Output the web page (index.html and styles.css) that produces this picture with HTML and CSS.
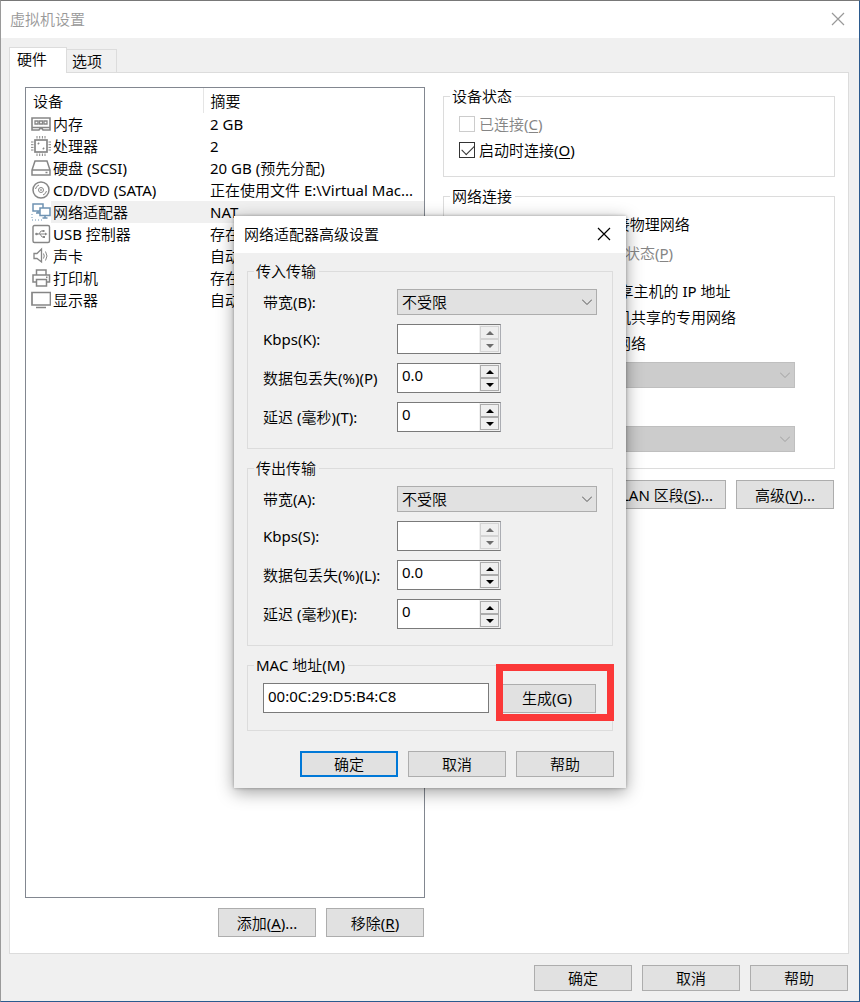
FILE: index.html
```html
<!DOCTYPE html>
<html lang="zh-CN">
<head>
<meta charset="utf-8">
<title>虚拟机设置</title>
<link rel="stylesheet" href="styles.css">
</head>
<body>
<div class="window">
  <header class="titlebar titlebar-inactive">
    <h1>虚拟机设置</h1>
    <button class="close" aria-label="关闭"><svg viewBox="0 0 14 14"><path d="M1 1l12 12M13 1L1 13"/></svg></button>
  </header>

  <main class="content">
    <div class="tabs" role="tablist">
      <button class="tab tab-active" role="tab" aria-selected="true">硬件</button>
      <button class="tab" role="tab" aria-selected="false">选项</button>
    </div>
    <div class="panel">
      <section class="devices">
        <div class="listbox">
          <table class="device-table">
            <colgroup><col class="col-icon"><col class="col-name"><col></colgroup>
            <thead>
              <tr><th colspan="2" class="head-device">设备</th><th class="head-summary">摘要</th></tr>
            </thead>
            <tbody>
              <tr>
                <td class="icon"><svg viewBox="0 0 20 20"><path d="M1 4h18v9.500H1zM1 12.500V16h7l1-1.500h2l1 1.500h7v-3.500" stroke-width="1.600"/><path d="M4 7h3v3H4zM8.500 7h3v3h-3zM13 7h3v3h-3z" stroke-width="1.300"/></svg></td>
                <td>内存</td><td class="summary">2 GB</td>
              </tr>
              <tr>
                <td class="icon"><svg viewBox="0 0 20 20"><rect x="4" y="4" width="12" height="12" stroke-width="1.700"/><path d="M6 0v2.500M8.700 0v2.500M11.400 0v2.500M14 0v2.500M6 17.500V20M8.700 17.500V20M11.400 17.500V20M14 17.500V20M0 6h2.500M0 8.700h2.500M0 11.400h2.500M0 14h2.500M17.500 6H20M17.500 8.700H20M17.500 11.400H20M17.500 14H20"/><path d="M7 7l1 1M12 12l1 1" stroke-width="2"/></svg></td>
                <td>处理器</td><td class="summary">2</td>
              </tr>
              <tr>
                <td class="icon"><svg viewBox="0 0 20 20"><path d="M4 3h12l3 9v5H1v-5zM1 12h18" stroke-width="1.500"/><path d="M14.500 14.500h2" stroke-width="1.500"/></svg></td>
                <td>硬盘 (SCSI)</td><td class="summary">20 GB (预先分配)</td>
              </tr>
              <tr>
                <td class="icon"><svg viewBox="0 0 20 20"><circle cx="10" cy="10" r="8" stroke-width="1.500"/><circle cx="10" cy="10" r="2.500"/><circle cx="10" cy="10" r=".5"/><path d="M4.500 9A5.500 5.500 0 0 1 8 5M15.500 11A5.500 5.500 0 0 1 12 15"/></svg></td>
                <td>CD/DVD (SATA)</td><td class="summary">正在使用文件 E:\Virtual Mac...</td>
              </tr>
              <tr class="selected">
                <td class="icon icon-blue"><svg viewBox="0 0 20 20"><path d="M2 2h10v7H2zM5 11h4M7 9v2" stroke-width="1.500"/><path class="fill" d="M9 6h10v7.500H9z" stroke-width="1.500"/><path d="M14 13.500V16M11.500 16h5" stroke-width="1.500"/><path d="M1 12v6h10" stroke-dasharray="1 2"/></svg></td>
                <td>网络适配器</td><td class="summary">NAT</td>
              </tr>
              <tr>
                <td class="icon"><svg viewBox="0 0 20 20"><rect x="2" y="1.500" width="16.500" height="17" rx="1.500" stroke-width="1.400"/><path d="M5 10h10M8 10l2-3h2M9 10l2 3h2"/><path class="solid" d="M14 8.500l2.500 1.500-2.500 1.500zM11.500 6h2v2h-2zM12 12h2v2h-2z"/><circle class="solid" cx="5.500" cy="10" r="1.300"/></svg></td>
                <td>USB 控制器</td><td class="summary">存在</td>
              </tr>
              <tr>
                <td class="icon"><svg viewBox="0 0 20 20"><path d="M3 7.500h3l4.500-4.500v13L6 12.500H3z" stroke-width="1.300"/><path d="M12.500 7.500q1.500 2.500 0 5M14.500 5.500q3 4.500 0 9"/></svg></td>
                <td>声卡</td><td class="summary">自动检测</td>
              </tr>
              <tr>
                <td class="icon"><svg viewBox="0 0 20 20"><path d="M5.500 7V2h9.500v5M5 14H2V7h16.500v7H15.500M5.500 11.500h10V18h-10zM15 9.300h1.500" stroke-width="1.500"/></svg></td>
                <td>打印机</td><td class="summary">存在</td>
              </tr>
              <tr>
                <td class="icon"><svg viewBox="0 0 20 20"><path d="M1 2.500h18.500v12.500H1z" stroke-width="1.700"/><path d="M5 17.500h10" stroke-width="1.500"/></svg></td>
                <td>显示器</td><td class="summary">自动检测</td>
              </tr>
            </tbody>
          </table>
        </div>
        <div class="button-row">
          <button class="button button-tall">添加(<u>A</u>)...</button>
          <button class="button button-tall">移除(<u>R</u>)</button>
        </div>
      </section>

      <section class="settings">
        <fieldset class="group status-group">
          <legend>设备状态</legend>
          <label class="check disabled"><input type="checkbox" disabled><span>已连接(<u>C</u>)</span></label>
          <label class="check"><input type="checkbox" checked><span>启动时连接(<u>O</u>)</span></label>
        </fieldset>
        <fieldset class="group network-group">
          <legend>网络连接</legend>
          <label class="check"><input type="radio" name="net"><span>桥接模式(<u>B</u>): 直接连接物理网络</span></label>
          <label class="check disabled nested"><input type="checkbox" disabled><span>复制物理网络连接状态(<u>P</u>)</span></label>
          <label class="check"><input type="radio" name="net" checked><span>NAT 模式(<u>N</u>): 用于共享主机的 IP 地址</span></label>
          <label class="check"><input type="radio" name="net"><span>仅主机模式(<u>H</u>): 与主机共享的专用网络</span></label>
          <label class="check"><input type="radio" name="net"><span>自定义(<u>U</u>): 特定虚拟网络</span></label>
          <div class="select select-disabled"><select disabled aria-label="特定虚拟网络"></select><svg viewBox="0 0 10 6"><path d="M0 .5l5 5 5-5"/></svg></div>
          <label class="check"><input type="radio" name="net"><span>LAN 区段(<u>L</u>):</span></label>
          <div class="select select-disabled"><select disabled aria-label="LAN 区段"></select><svg viewBox="0 0 10 6"><path d="M0 .5l5 5 5-5"/></svg></div>
        </fieldset>
        <div class="button-row">
          <button class="button button-tall button-wide">LAN 区段(<u>S</u>)...</button>
          <button class="button button-tall">高级(<u>V</u>)...</button>
        </div>
      </section>
    </div>
  </main>

  <footer class="footer button-row">
    <button class="button">确定</button>
    <button class="button">取消</button>
    <button class="button">帮助</button>
  </footer>

  <div class="dialog" role="dialog" aria-labelledby="dialog-title">
    <header class="titlebar">
      <h2 id="dialog-title">网络适配器高级设置</h2>
      <button class="close" aria-label="关闭"><svg viewBox="0 0 14 14"><path d="M1 1l12 12M13 1L1 13"/></svg></button>
    </header>
    <div class="dialog-body">
      <fieldset class="group">
        <legend>传入传输</legend>
        <div class="form">
          <label for="in-bw">带宽(B):</label>
          <div class="select"><select id="in-bw"><option>不受限</option></select><svg viewBox="0 0 10 6"><path d="M0 .5l5 5 5-5"/></svg></div>
          <label for="in-kbps">Kbps(K):</label>
          <div class="spin"><input id="in-kbps" type="text" disabled><div class="arrows"><button class="up" disabled aria-label="增加"></button><button class="down" disabled aria-label="减少"></button></div></div>
          <label for="in-loss">数据包丢失(%)(P)</label>
          <div class="spin"><input id="in-loss" type="text" value="0.0"><div class="arrows"><button class="up" aria-label="增加"></button><button class="down" aria-label="减少"></button></div></div>
          <label for="in-delay">延迟 (毫秒)(T):</label>
          <div class="spin"><input id="in-delay" type="text" value="0"><div class="arrows"><button class="up" aria-label="增加"></button><button class="down" aria-label="减少"></button></div></div>
        </div>
      </fieldset>
      <fieldset class="group">
        <legend>传出传输</legend>
        <div class="form">
          <label for="out-bw">带宽(A):</label>
          <div class="select"><select id="out-bw"><option>不受限</option></select><svg viewBox="0 0 10 6"><path d="M0 .5l5 5 5-5"/></svg></div>
          <label for="out-kbps">Kbps(S):</label>
          <div class="spin"><input id="out-kbps" type="text" disabled><div class="arrows"><button class="up" disabled aria-label="增加"></button><button class="down" disabled aria-label="减少"></button></div></div>
          <label for="out-loss">数据包丢失(%)(L):</label>
          <div class="spin"><input id="out-loss" type="text" value="0.0"><div class="arrows"><button class="up" aria-label="增加"></button><button class="down" aria-label="减少"></button></div></div>
          <label for="out-delay">延迟 (毫秒)(E):</label>
          <div class="spin"><input id="out-delay" type="text" value="0"><div class="arrows"><button class="up" aria-label="增加"></button><button class="down" aria-label="减少"></button></div></div>
        </div>
      </fieldset>
      <fieldset class="group mac-group">
        <legend><label for="mac">MAC 地址(M)</label></legend>
        <div class="mac-row">
          <input id="mac" class="textbox" type="text" value="00:0C:29:D5:B4:C8">
          <div class="marked"><button class="button button-tall">生成(G)</button></div>
        </div>
      </fieldset>
      <div class="button-row dialog-buttons">
        <button class="button button-default">确定</button>
        <button class="button">取消</button>
        <button class="button">帮助</button>
      </div>
    </div>
  </div>
</div>
</body>
</html>
```
FILE: styles.css
```css
* {
  box-sizing: border-box;
}

body {
  margin: 0;
  color: #000;
  font: 15px/22px "Noto Sans", "Noto Sans CJK SC DemiLight", "Noto Sans CJK SC", sans-serif;
}

button,
input,
select {
  margin: 0;
  padding: 0;
  border-radius: 0;
  color: inherit;
  font: inherit;
}

.window {
  position: relative;
  display: flex;
  flex-direction: column;
  min-height: 100vh;
  border: 1px solid #787878;
  border-left-color: #9a9a9a;
  border-right-color: #2b5a8e;
  border-bottom-color: #2b5a8e;
  background: #f0f0f0;
}

/* Title bars */
.titlebar {
  display: flex;
  align-items: center;
  justify-content: space-between;
  height: 37px;
  padding: 0 15px 1px 10px;
  background: #fff;
}

.titlebar h1,
.titlebar h2 {
  margin: 0;
  font-size: 15px;
  font-weight: 400;
}

.titlebar-inactive {
  padding: 0 14px 1px 9px;
  color: #999;
}

.close {
  display: flex;
  border: 0;
  background: none;
}

.close svg {
  width: 14px;
  height: 14px;
  fill: none;
  stroke: currentColor;
  stroke-width: 1.2;
}

/* Tabs and panel */
.content {
  display: flex;
  flex: 1;
  flex-direction: column;
  padding: 9px 10px 0 8px;
}

.tabs {
  display: flex;
  align-items: flex-end;
}

.tab {
  width: 50px;
  height: 23px;
  padding: 0 0 0 5px;
  border: 1px solid #dcdcdc;
  border-width: 1px 1px 0 0;
  background: #f0f0f0;
  text-align: left;
}

.tab-active {
  z-index: 1;
  width: 58px;
  height: 26px;
  margin-bottom: -1px;
  padding: 0 0 3px 7px;
  border-width: 1px 1px 0 1px;
  background: #fff;
}

.panel {
  display: flex;
  flex: 1;
  gap: 18px;
  padding: 14px 13px 16px 15px;
  border: 1px solid #dcdcdc;
  background: #fff;
}

.devices {
  display: flex;
  flex: 400 1 0;
  flex-direction: column;
  gap: 10px;
  min-width: 0;
}

.listbox {
  flex: 1;
  border: 1px solid #828790;
}

.device-table {
  width: 100%;
  border-collapse: collapse;
  table-layout: fixed;
}

.col-icon {
  width: 25px;
}

.col-name {
  width: 152px;
}

.device-table th {
  height: 25px;
  padding: 0 0 0 7px;
  font-weight: 400;
  text-align: left;
}

.device-table .head-summary {
  border: 1px solid #e5e5e5;
  border-width: 0 0 0 1px;
}

.device-table td {
  height: 22px;
  padding: 0 0 0 2px;
  overflow: hidden;
  white-space: nowrap;
}

.device-table .summary {
  padding-left: 7px;
}

.device-table .icon {
  padding: 0 0 0 5px;
  background: #fff;
}

.selected {
  background: #f0f0f0;
}

.icon svg {
  display: block;
  width: 20px;
  height: 20px;
  fill: none;
  stroke: #868686;
}

.icon .solid {
  fill: #868686;
  stroke: none;
}

.icon-blue svg {
  stroke: #6f93b3;
}

.icon .fill {
  fill: #fff;
}

.button-row {
  display: flex;
  justify-content: flex-end;
  gap: 10px;
}

.panel .button-row {
  padding-right: 1px;
}

.button {
  width: 98px;
  height: 26px;
  border: 1px solid #adadad;
  background: #e1e1e1;
  white-space: nowrap;
}

.button-tall {
  height: 29px;
}

.button-wide {
  width: 118px;
}

.button-default {
  border: 2px solid #0078d7;
}

u {
  text-underline-offset: 2px;
}

/* Group boxes */
.settings {
  flex: 392 1 0;
  min-width: 0;
}

.group {
  min-width: 0;
  margin: 0;
  padding: 0 15px 16px;
  border: 1px solid #dcdcdc;
}

.group legend {
  margin-left: -9px;
  padding: 0 3px 0 2px;
  line-height: 21px;
}

.settings .group {
  margin-bottom: 11px;
}

.settings .status-group {
  margin-top: -1px;
  margin-bottom: 9px;
  padding-bottom: 13px;
}

.check {
  display: flex;
  align-items: center;
  gap: 4px;
  height: 26px;
  white-space: nowrap;
}

.check input {
  flex: none;
  width: 16px;
  height: 16px;
  border: 1px solid #333;
  background: #fff;
  appearance: none;
}

.check input[type="radio"] {
  border-radius: 50%;
}

.check input[type="checkbox"]:checked::before {
  display: block;
  width: 11px;
  height: 6px;
  margin: 2px 0 0 2px;
  border: solid #333;
  border-width: 0 0 1px 1px;
  content: "";
  transform: rotate(-45deg);
}

.disabled {
  color: #858585;
}

.check input:disabled {
  border-color: #ccc;
}

.status-group .disabled {
  margin-top: 4px;
}

.network-group .check {
  padding-left: 4px;
}

.network-group .check:first-of-type {
  margin-top: 4px;
}

.network-group .nested {
  margin: 3px 0 12px 22px;
}

.network-group .select {
  margin: 6px 24px 6px 40px;
}

.network-group .select:last-child {
  margin-bottom: 0;
}

/* Drop-downs */
.select {
  position: relative;
}

.select select {
  display: block;
  width: 100%;
  height: 26px;
  padding: 0 4px;
  border: 1px solid #adadad;
  background: #e1e1e1;
  appearance: none;
}

.select svg {
  position: absolute;
  top: 10px;
  right: 5px;
  width: 10px;
  height: 6px;
  fill: none;
  stroke: #555;
  pointer-events: none;
}

.select-disabled select {
  border-color: #bfbfbf;
  background: #ccc;
  opacity: 1;
}

.select-disabled svg {
  stroke: #a0a0a0;
}

.footer {
  padding: 11px 11px 10px;
}

/* Advanced settings dialog */
.dialog {
  position: absolute;
  z-index: 2;
  top: 215px;
  left: calc(50% - 196px);
  width: 392px;
  background: #f0f0f0;
  box-shadow: 0 4px 16px rgba(0, 0, 0, .38), 0 0 3px rgba(0, 0, 0, .3);
}

.dialog-body {
  display: flex;
  flex-direction: column;
  gap: 9px;
  padding: 8px 13px 11px;
}

.form {
  display: grid;
  grid-template-columns: 125px 1fr;
  row-gap: 9px;
  align-items: center;
  column-gap: 9px;
  padding-top: 7px;
}

.form label {
  white-space: nowrap;
}

.spin {
  display: flex;
  width: 104px;
  height: 30px;
  border: 1px solid #7a7a7a;
  border-right-color: #abadb3;
  background: #f0f0f0;
}

.spin input,
.textbox {
  flex: 1;
  min-width: 0;
  padding: 0 4px 6px;
  border: 0;
  background: #fff;
}

.arrows {
  display: flex;
  flex-direction: column;
  width: 21px;
  padding: 1px;
}

.arrows button {
  display: flex;
  flex: 1;
  align-items: center;
  justify-content: center;
  border: 1px solid #acacac;
  background: #efefef;
}

.arrows button::before {
  border: 4px solid transparent;
  content: "";
}

.arrows .up::before {
  border-top: 0;
  border-bottom-color: #000;
}

.arrows .down::before {
  border-bottom: 0;
  border-top-color: #000;
}

.arrows button:disabled {
  border-color: #d4d4d4;
}

.arrows .up:disabled::before {
  border-bottom-color: #6d6d6d;
}

.arrows .down:disabled::before {
  border-top-color: #6d6d6d;
}

.mac-group {
  padding-bottom: 17px;
}

.mac-row {
  display: flex;
  align-items: center;
  gap: 9px;
  padding: 7px 1px 0 0;
}

.mac-row .textbox {
  height: 30px;
  padding-bottom: 5px;
  border: 1px solid #7a7a7a;
}

.marked {
  position: relative;
}

.marked::after {
  position: absolute;
  inset: -20px -18px -8px -2px;
  border: 7px solid #fb3838;
  content: "";
  pointer-events: none;
}

.dialog-buttons {
  padding-top: 11px;
  margin-right: -1px;
}
```
